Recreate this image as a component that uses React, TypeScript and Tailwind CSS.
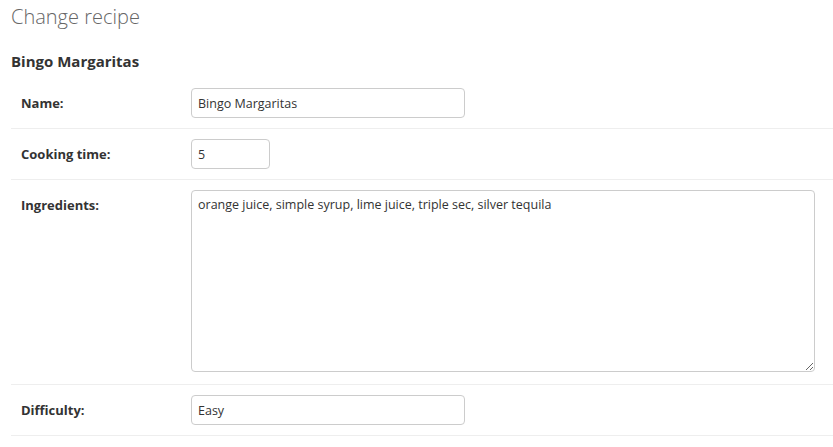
import React from "react";

const font = { fontFamily: '"Segoe UI", "Open Sans", "Noto Sans", sans-serif' };

interface RowProps {
  label: string;
  first?: boolean;
  tall?: boolean;
  children: React.ReactNode;
}

const Row = ({ label, first, tall, children }: RowProps) => (
  <div
    className={`flex items-start px-[10px] pt-[10px] ${tall ? "pb-[12px]" : "pb-[10px]"} ${
      first ? "" : "border-t border-[#eeeeee]"
    }`}
  >
    <label className="w-[170px] shrink-0 pr-[10px] pt-[7px] text-[13px] font-bold leading-[16px] text-[#333333]">
      {label}
    </label>
    {children}
  </div>
);

const inputCls =
  "h-[30px] rounded-[4px] border border-[#cccccc] bg-white px-[6px] text-[12.5px] text-[#333333] outline-none";

export default function App() {
  return (
    <div className="min-h-[447px] w-full bg-white pl-[11px]" style={font}>
      <h1 className="pt-[5px] text-[20px] font-light leading-[24px] text-[#666666]">Change recipe</h1>
      <h2 className="mt-[23px] text-[15px] font-bold leading-[18px] text-[#333333]">Bingo Margaritas</h2>
      <div className="mt-[8px] border-b border-[#eeeeee]">
        <Row label="Name:" first>
          <input className={`${inputCls} w-[274px]`} defaultValue="Bingo Margaritas" />
        </Row>
        <Row label="Cooking time:">
          <input className={`${inputCls} w-[79px]`} defaultValue="5" />
        </Row>
        <Row label="Ingredients:" tall>
          <textarea
            className="h-[182px] w-[624px] rounded-[4px] border border-[#cccccc] bg-white px-[6px] py-[5px] text-[12.5px] leading-[18px] text-[#333333] outline-none"
            defaultValue="orange juice, simple syrup, lime juice, triple sec, silver tequila"
          />
        </Row>
        <Row label="Difficulty:">
          <input className={`${inputCls} w-[274px]`} defaultValue="Easy" />
        </Row>
      </div>
    </div>
  );
}
